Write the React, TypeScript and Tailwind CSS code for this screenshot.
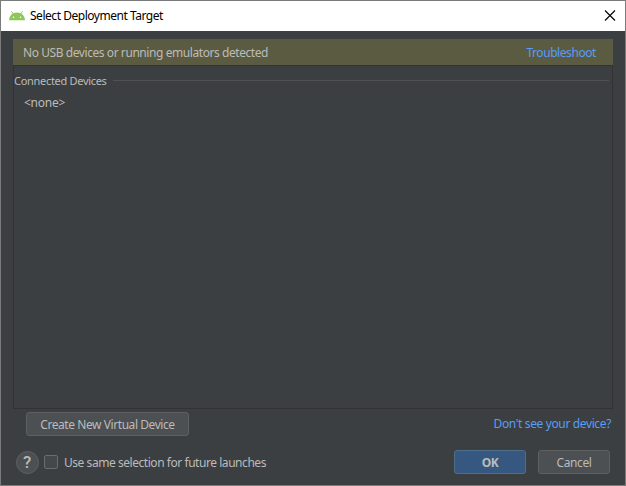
function AndroidIcon() {
  return (
    <svg width="16" height="10" viewBox="0 0 16 10" className="mb-px shrink-0">
      <path d="M2.4 0.3 L4.4 3 M13.6 0.3 L11.6 3" stroke="#8fc65a" strokeWidth="1" />
      <path d="M0 9.2 C0.3 4.6 3.6 1.5 8 1.5 S15.7 4.6 16 9.2 Z" fill="#8fc65a" />
      <circle cx="4.5" cy="6.3" r="0.8" fill="#fff" />
      <circle cx="11.5" cy="6.3" r="0.8" fill="#fff" />
    </svg>
  );
}

function TitleBar() {
  return (
    <header className="flex h-[30px] items-center bg-white pr-[10px] pl-2 text-black">
      <AndroidIcon />
      <h1 className="ml-[5px] flex-1 text-[12px] leading-[30px] tracking-[-0.47px]">Select Deployment Target</h1>
      <button aria-label="Close" className="-mr-px">
        <svg width="12" height="11" viewBox="0 0 12 11" className="mb-px">
          <path d="M1 0.5 L11 10.5 M11 0.5 L1 10.5" stroke="#000" strokeWidth="1.1" />
        </svg>
      </button>
    </header>
  );
}

export default function App() {
  return (
    <div className="flex h-[486px] w-[626px] flex-col overflow-hidden border border-[#7b7b7b] bg-[#3c3f41] font-['Noto_Sans','Open_Sans',sans-serif] text-[12px] tracking-[-0.43px] whitespace-nowrap text-[#bbbbbb]">
      <TitleBar />
      <main className="mx-3 mt-2 flex h-[370px] flex-col">
        <div className="flex h-[26px] items-center justify-between bg-[#5b5b41] pt-[2px] pr-[17px] pl-[10px]">
          <span>No USB devices or running emulators detected</span>
          <a className="text-[#589df6]">Troubleshoot</a>
        </div>
        <section className="flex-1 border border-[#323232]">
          <div className="flex h-[29px] items-center pr-[2px]">
            <span className="pt-[2px] text-[11px] tracking-[-0.3px]">Connected Devices</span>
            <span className="ml-[6px] mr-px h-px flex-1 bg-[#515151]" />
          </div>
          <div className="pl-[10px] leading-[15px] tracking-[-0.25px]">&lt;none&gt;</div>
        </section>
      </main>
      <div className="mt-[3px] flex h-6 items-center justify-between pr-[14px] pl-[25px]">
        <button className="h-6 w-[163px] rounded-[3px] border border-[#5e6060] bg-[#4c5052] pt-[2px]">Create New Virtual Device</button>
        <a className="tracking-[-0.37px] text-[#589df6]">Don't see your device?</a>
      </div>
      <footer className="mt-[14px] flex h-6 items-center pr-[15px] pl-[15px]">
        <button className="flex h-[23px] w-[23px] items-center justify-center rounded-full border border-[#5e6060] bg-[#4c5052] pr-px font-['Roboto',sans-serif] text-[17px] leading-none font-medium">?</button>
        <span className="ml-[5px] h-[14px] w-[14px] rounded-[2px] border border-[#6b6b6b] bg-[#43494a]" />
        <span className="ml-[6px] flex-1 pt-[2px] tracking-[-0.45px]">Use same selection for future launches</span>
        <button className="h-6 w-[72px] rounded-[3px] border border-[#4c708c] bg-[#365880] pt-[2px] font-bold">OK</button>
        <button className="ml-3 h-6 w-[72px] rounded-[3px] border border-[#5e6060] bg-[#4c5052] pt-[2px]">Cancel</button>
      </footer>
    </div>
  );
}
